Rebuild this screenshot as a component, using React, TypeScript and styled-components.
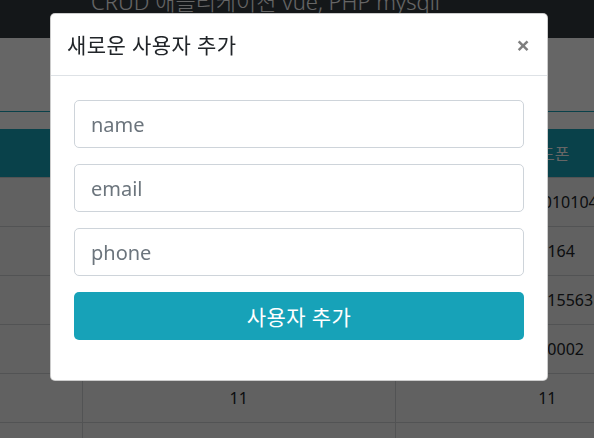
import React from 'react';
import styled, { createGlobalStyle } from 'styled-components';

const users = [
  { id: '', name: '홍길동', phone: '01012010104' },
  { id: '', name: '김철수', phone: '010164' },
  { id: '', name: '이영희', phone: '0101015563' },
  { id: '', name: '박민수', phone: '01010002' },
  { id: '', name: '11', phone: '11' },
  { id: '', name: '22', phone: '22' },
];

const App = () => {
  return (
    <>
      <GlobalStyle />
      <Page>
        <TopBar>
          <AppTitle>CRUD 애플리케이션 vue, PHP mysqli</AppTitle>
        </TopBar>
        <Toolbar />
        <UserTable>
          <colgroup>
            <col style={{ width: 82 }} />
            <col style={{ width: 313 }} />
            <col style={{ width: 304 }} />
          </colgroup>
          <thead>
            <tr>
              <HeadCell />
              <HeadCell>이름</HeadCell>
              <HeadCell>핸드폰</HeadCell>
            </tr>
          </thead>
          <tbody>
            {users.map((u, i) => (
              <Row key={i}>
                <Cell>{u.id}</Cell>
                <Cell>{u.name}</Cell>
                <Cell>{u.phone}</Cell>
              </Row>
            ))}
          </tbody>
        </UserTable>
      </Page>

      <Backdrop>
        <Dialog>
          <DialogHeader>
            <DialogTitle>새로운 사용자 추가</DialogTitle>
            <CloseButton aria-label="close">×</CloseButton>
          </DialogHeader>
          <DialogBody>
            <Field placeholder="name" />
            <Field placeholder="email" />
            <Field placeholder="phone" />
            <SubmitButton>사용자 추가</SubmitButton>
          </DialogBody>
        </Dialog>
      </Backdrop>
    </>
  );
};

export default App;

const GlobalStyle = createGlobalStyle`
  * {
    box-sizing: border-box;
  }
  body {
    margin: 0;
    overflow: hidden;
    background: #fff;
    color: #212529;
    font-family: "Noto Sans", "Noto Sans CJK KR", sans-serif;
  }
`;

const Page = styled.div`
  margin-top: -30px;
  width: 700px;
`;

const TopBar = styled.header`
  height: 68px;
  padding: 17px 0 0 91px;
  background: #343a40;
`;

const AppTitle = styled.h1`
  margin: 0;
  color: #fff;
  font-size: 22px;
  font-weight: 300;
  line-height: 29px;
`;

const Toolbar = styled.div`
  height: 74px;
  border-bottom: 1px solid #17a2b8;
  margin-bottom: 17px;
`;

const UserTable = styled.table`
  width: 700px;
  table-layout: fixed;
  border-collapse: collapse;
  font-size: 16px;
`;

const HeadCell = styled.th`
  height: 48px;
  padding: 0;
  background: #17a2b8;
  color: #fff;
  font-weight: 400;
  text-align: center;
`;

const Row = styled.tr`
  background: #f2f2f2;
  border-top: 1px solid #cdd0d3;
`;

const Cell = styled.td`
  height: 49px;
  padding: 0;
  text-align: center;
  border-right: 1px solid #cdd0d3;
`;

const Backdrop = styled.div`
  position: fixed;
  inset: 0;
  background: rgba(0, 0, 0, 0.6);
`;

const Dialog = styled.div`
  width: 498px;
  margin: 13px 0 0 50px;
  background: #fff;
  border: 1px solid rgba(0, 0, 0, 0.2);
  border-radius: 5px;
`;

const DialogHeader = styled.div`
  display: flex;
  align-items: center;
  justify-content: space-between;
  padding: 16px 16px 15px 16px;
  border-bottom: 1px solid #dee2e6;
`;

const DialogTitle = styled.h5`
  margin: 0;
  font-size: 21px;
  font-weight: 400;
  letter-spacing: 0.4px;
  line-height: 30px;
  color: #212529;
`;

const CloseButton = styled.button`
  border: 0;
  padding: 0 1px 0 0;
  background: transparent;
  color: #000;
  opacity: 0.5;
  font-family: "Noto Sans", sans-serif;
  font-size: 24px;
  font-weight: 700;
  line-height: 1;
  cursor: pointer;
`;

const DialogBody = styled.div`
  display: flex;
  flex-direction: column;
  gap: 16px;
  padding: 24px 23px 40px 23px;
`;

const Field = styled.input`
  height: 48px;
  padding: 0 16px;
  border: 1px solid #ced4da;
  border-radius: 5px;
  font-family: "Noto Sans", "Noto Sans CJK KR", sans-serif;
  font-size: 20px;
  color: #495057;
  &::placeholder {
    color: #6c757d;
  }
`;

const SubmitButton = styled.button`
  height: 48px;
  border: 0;
  border-radius: 5px;
  background: #17a2b8;
  color: #fff;
  font-family: "Noto Sans", "Noto Sans CJK KR", sans-serif;
  font-size: 21px;
  letter-spacing: 0.4px;
  cursor: pointer;
`;
